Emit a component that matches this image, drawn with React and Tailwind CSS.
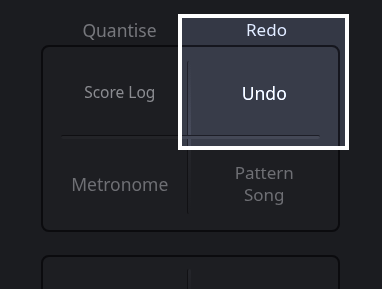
const Divider = ({ vertical }) =>
  vertical ? (
    <div className="absolute left-[144px] top-[14px] bottom-[16px] w-[4px] rounded-full bg-gradient-to-b from-transparent via-[#25262b] to-transparent border-l border-[#111114]" />
  ) : (
    <div className="absolute left-[18px] right-[18px] top-[88px] h-[4px] rounded-full bg-[#232428] border-t border-[#0f0f12]" />
  );

export default function App() {
  return (
    <div
      className="relative w-[382px] h-[289px] overflow-hidden bg-[#1b1c20]"
      style={{ fontFamily: "'Noto Sans', 'Open Sans', sans-serif" }}
    >
      {/* labels above pad */}
      <div className="flex h-[45px] items-end pb-[5px] pl-[41px] w-[340px]">
        <div className="flex-1 text-center text-[17.5px] leading-[20px] text-[#76777c] pl-[5px]">Quantise</div>
        <div className="flex-1 text-center text-[17px] leading-[20px] text-[#76777c]">Redo</div>
      </div>

      {/* pad */}
      <div className="relative ml-[41px] w-[299px] h-[187px] rounded-[8px] border-2 border-[#0b0b0e] bg-[#1d1e22] grid grid-cols-2 grid-rows-2">
        <div className="flex items-center justify-center text-[15.5px] text-[#8b8c91] pl-[6px]">Score Log</div>
        <div className="flex items-center justify-center text-[17.5px] text-[#8b8c91]">Undo</div>
        <div className="flex items-center justify-center text-[17.5px] text-[#6e6f74] pl-[6px]">Metronome</div>
        <div className="flex items-center justify-center text-center text-[17px] leading-[22px] text-[#6e6f74]">
          Pattern
          <br />
          Song
        </div>
        <Divider vertical />
        <Divider />
      </div>

      {/* next pad */}
      <div className="relative mt-[23px] ml-[41px] w-[299px] h-[80px] rounded-[8px] border-2 border-[#0b0b0e] bg-[#1d1e22]">
        <div className="absolute left-[144px] top-[12px] w-[4px] h-[30px] rounded-full bg-gradient-to-b from-[#25262b] to-transparent border-l border-[#111114]" />
      </div>

      {/* highlight */}
      <div className="absolute left-[182px] top-[18px] w-[163px] h-[128px] bg-[#7b8088] mix-blend-color-dodge" />
      <div className="absolute left-[178px] top-[14px] w-[171px] h-[136px] border-4 border-white" />
    </div>
  );
}
